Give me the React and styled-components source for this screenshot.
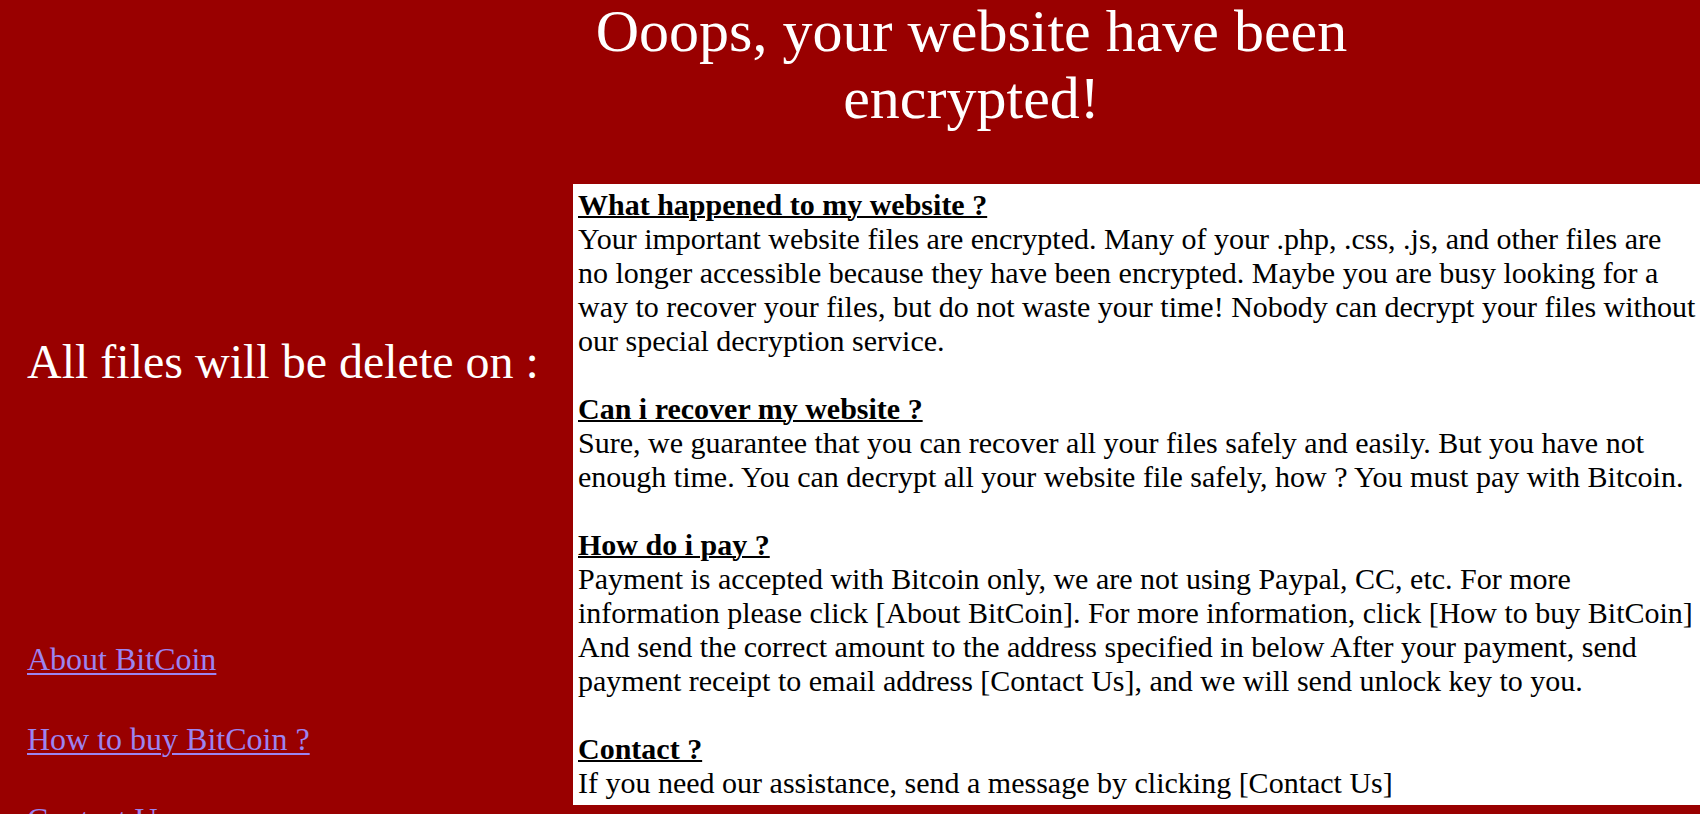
import React from "react";
import styled, { createGlobalStyle } from "styled-components";

const Global = createGlobalStyle`
  html, body { margin: 0; padding: 0; }
  body {
    background: #990000;
    overflow: hidden;
    font-family: "Liberation Serif", "Times New Roman", serif;
  }
`;

const Page = styled.div`
  width: 1700px;
  height: 814px;
  overflow: hidden;
  display: flex;
  flex-direction: column;
`;

const Title = styled.h1`
  margin: -2px 0 0 573px;
  width: 797px;
  font-weight: normal;
  font-size: 60px;
  line-height: 67px;
  color: #ffffff;
  text-align: center;
`;

const Main = styled.div`
  margin-top: 52px;
  display: grid;
  grid-template-columns: 563px 1fr;
  column-gap: 10px;
  align-items: start;
`;

const Side = styled.div`
  display: flex;
  flex-direction: column;
  padding-left: 27px;
`;

const Deadline = styled.h2`
  margin: 148px 0 0;
  font-weight: normal;
  font-size: 48px;
  line-height: 60px;
  color: #ffffff;
  white-space: nowrap;
`;

const Links = styled.nav`
  margin-top: 247px;
  display: flex;
  flex-direction: column;
  gap: 40px;
`;

const SideLink = styled.a`
  font-size: 32px;
  line-height: 40px;
  color: #9c84f0;
  text-decoration: underline;
  text-underline-offset: 3px;
  text-decoration-thickness: 2px;
`;

const Notice = styled.div`
  background: #ffffff;
  color: #000000;
  padding: 4px 3px 5px 5px;
  font-size: 30px;
  line-height: 34px;
`;

const Heading = styled.b`
  text-decoration: underline;
  text-decoration-thickness: 2px;
`;

export default function App() {
  return (
    <>
      <Global />
      <Page>
        <Title>Ooops, your website have been encrypted!</Title>
        <Main>
          <Side>
            <Deadline>All files will be delete on :</Deadline>
            <Links>
              <SideLink href="#about">About BitCoin</SideLink>
              <SideLink href="#buy">How to buy BitCoin ?</SideLink>
              <SideLink href="#contact">Contact Us</SideLink>
            </Links>
          </Side>
          <Notice>
            <Heading>What happened to my website ?</Heading>
            <br />
            Your important website files are encrypted. Many of your .php, .css, .js, and other files are no longer accessible because they have been encrypted. Maybe you are busy looking for a way to recover your files, but do not waste your time! Nobody can decrypt your files without our special decryption service.
            <br />
            <br />
            <Heading>Can i recover my website ?</Heading>
            <br />
            Sure, we guarantee that you can recover all your files safely and easily. But you have not enough time. You can decrypt all your website file safely, how ? You must pay with Bitcoin.
            <br />
            <br />
            <Heading>How do i pay ?</Heading>
            <br />
            Payment is accepted with Bitcoin only, we are not using Paypal, CC, etc. For more information please click [About BitCoin]. For more information, click [How to buy BitCoin] And send the correct amount to the address specified in below After your payment, send payment receipt to email address [Contact Us], and we will send unlock key to you.
            <br />
            <br />
            <Heading>Contact ?</Heading>
            <br />
            If you need our assistance, send a message by clicking [Contact Us]
          </Notice>
        </Main>
      </Page>
    </>
  );
}
